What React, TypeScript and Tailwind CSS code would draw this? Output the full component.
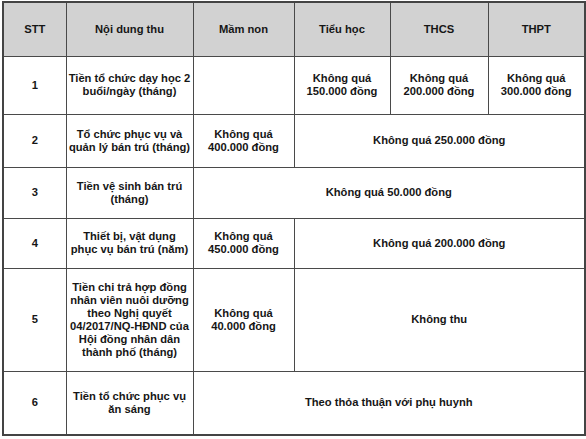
import React from 'react';

const cell = 'border border-[#4a4a4a] text-center align-middle px-[2px]';

const App: React.FC = () => {
  return (
    <div className="w-[586px] h-[439px] bg-white pl-[2px] pt-[1px] font-['Liberation_Sans',Arial,sans-serif] text-[11.2px] leading-[13px] font-bold text-[#161616]">
      <table className="table-fixed border-collapse border-2 border-[#444444] w-[582px]">
        <colgroup>
          <col className="w-[63px]" />
          <col className="w-[127px]" />
          <col className="w-[101px]" />
          <col className="w-[96px]" />
          <col className="w-[98px]" />
          <col className="w-[97px]" />
        </colgroup>
        <tbody>
          {/* Header */}
          <tr className="h-[54px] bg-[#d2d2d2]">
            <td className={cell}>STT</td>
            <td className={cell}>Nội dung thu</td>
            <td className={cell}>Mầm non</td>
            <td className={cell}>Tiểu học</td>
            <td className={cell}>THCS</td>
            <td className={cell}>THPT</td>
          </tr>
          <tr className="h-[58px]">
            <td className={cell}>1</td>
            <td className={cell}>Tiền tổ chức dạy học 2<br />buổi/ngày (tháng)</td>
            <td className={cell}></td>
            <td className={cell}>Không quá<br />150.000 đồng</td>
            <td className={cell}>Không quá<br />200.000 đồng</td>
            <td className={cell}>Không quá<br />300.000 đồng</td>
          </tr>
          <tr className="h-[53px]">
            <td className={cell}>2</td>
            <td className={cell}>Tổ chức phục vụ và<br />quản lý bán trú (tháng)</td>
            <td className={cell}>Không quá<br />400.000 đồng</td>
            <td className={cell} colSpan={3}>Không quá 250.000 đồng</td>
          </tr>
          <tr className="h-[51px]">
            <td className={cell}>3</td>
            <td className={cell}>Tiền vệ sinh bán trú<br />(tháng)</td>
            <td className={cell} colSpan={4}>Không quá 50.000 đồng</td>
          </tr>
          <tr className="h-[50px]">
            <td className={cell}>4</td>
            <td className={cell}>Thiết bị, vật dụng<br />phục vụ bán trú (năm)</td>
            <td className={cell}>Không quá<br />450.000 đồng</td>
            <td className={cell} colSpan={3}>Không quá 200.000 đồng</td>
          </tr>
          <tr className="h-[103px]">
            <td className={cell}>5</td>
            <td className={cell}>
              Tiền chi trả hợp đồng<br />nhân viên nuôi dưỡng<br />theo Nghị quyết<br />04/2017/NQ-HĐND của<br />Hội đồng nhân dân<br />thành phố (tháng)
            </td>
            <td className={cell}>Không quá<br />40.000 đồng</td>
            <td className={cell} colSpan={3}>Không thu</td>
          </tr>
          <tr className="h-[64px]">
            <td className={cell}>6</td>
            <td className={cell}>Tiền tổ chức phục vụ<br />ăn sáng</td>
            <td className={cell} colSpan={4}>Theo thỏa thuận với phụ huynh</td>
          </tr>
        </tbody>
      </table>
    </div>
  );
};

export default App;
